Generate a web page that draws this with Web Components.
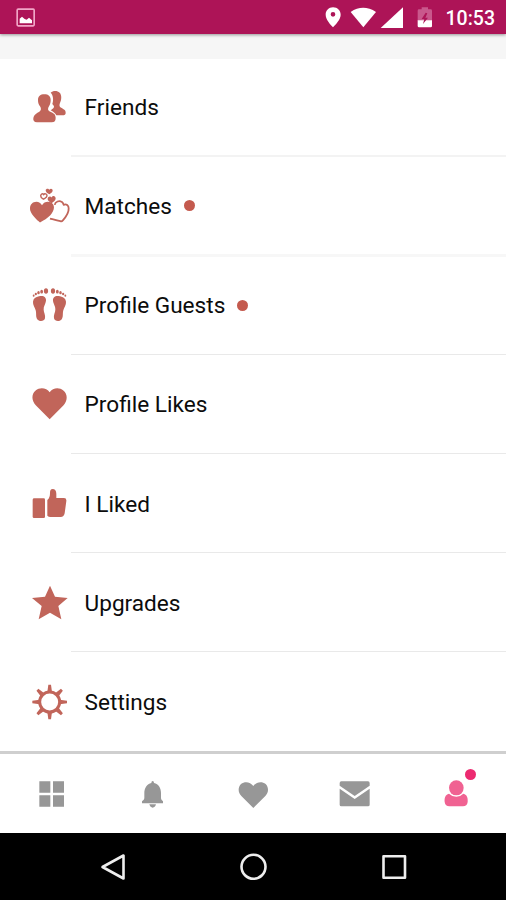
<!DOCTYPE html>
<html lang="en">
<head>
<meta charset="utf-8">
<meta name="viewport" content="width=device-width, initial-scale=1">
<title>Profile menu</title>
<style>
  html, body { margin: 0; height: 100%; }
  body { background: #fff; font-family: Roboto, sans-serif; overflow: hidden; }
</style>
</head>
<body>
<profile-screen></profile-screen>

<script>
const MENU_ICONS = {
  friends: `<svg viewBox="30 20 120 120">
    <path d="M92 37C98 31 112 30 119 37C125 43 125 56 121 65C118 72 117 77 121 81C128 86 138 88 137 98C137 103 134 105 127 105H109C106 99 99 94 92 90C95 87 99 85 101 82C104 78 100 75 97 71C101 59 100 45 92 37Z"/>
    <path d="M73 42C85 42 92 48 92 59C92 67 90 73 87 78C83 85 83 90 88 93C96 98 107 99 107 112C107 121 104 126 95 126H51C42 126 39 121 40 114C41 103 51 98 58 94C64 91 64 84 60 78C56 73 54 67 54 59C54 48 61 42 73 42Z"/>
  </svg>`,
  matches: `<svg viewBox="30 17.4 120 120">
    <path d="M66 75C73 62 91 62 99 72C106 83 99 96 91 105C82 114 72 120 60 127C50 119 36 106 31 92C27 77 36 65 49 65C57 65 62 69 66 75Z"/>
    <path d="M104 74C106 64 118 60 125 65C128 67 130 70 131 74C139 70 146 76 146 84C147 97 136 112 128 121C126 124 124 124 121 123C111 121 101 118 90 115" fill="none" stroke="currentColor" stroke-width="5.4" stroke-linejoin="round"/>
    <path d="M88 29C91 23 98 25 98 31C98 37 92 39 88 42C83 39 77 36 77 30C78 24 86 24 88 29Z"/>
    <path d="M95 52C98 45 107 47 107 55C107 62 99 65 95 69C88 65 82 61 83 55C84 48 92 47 95 52Z"/>
    <path d="M71 43C74 38 81 41 81 47C81 53 75 54 70 57C66 55 62 53 62 47C63 41 68 39 71 43Z" fill="none" stroke="currentColor" stroke-width="4.4"/>
  </svg>`,
  guests: `<svg viewBox="30 15 120 120">
    <g id="foot">
      <path d="M57 49C69 45 79 50 78 62C77 72 70 78 71 89C71 97 77 105 75 115C73 124 60 126 53 119C46 112 50 101 47 91C45 82 38 75 39 65C40 56 47 51 57 49Z"/>
      <ellipse cx="78" cy="33" rx="6.3" ry="8.2"/>
      <ellipse cx="65" cy="35" rx="4.2" ry="5.8"/>
      <ellipse cx="55.500" cy="38" rx="3.8" ry="4.8"/>
      <ellipse cx="47.500" cy="42" rx="3.3" ry="4"/>
      <ellipse cx="41" cy="47" rx="2.8" ry="3.4"/>
    </g>
    <use href="#foot" transform="translate(177 0) scale(-1 1)"/>
  </svg>`,
  likes: `<svg viewBox="30 12.6 120 120">
    <path d="M89 37C98 24 118 22 130 32C144 44 143 63 130 77L89 118L48 77C35 63 33 44 47 32C59 22 80 24 89 37Z"/>
  </svg>`,
  liked: `<svg viewBox="30 10 120 120">
    <path d="M43 53H71Q75 53 75 57V108Q75 112 71 112H42Q38 112 38 108V57Q38 53 43 53Z"/>
    <path d="M82 58C88 53 90 47 90 37C90 29 92 25 98 25C105 25 109 31 109 39V52H132Q140 52 139 61L134 98Q132 109 122 109H91Q86 109 82 105Z"/>
  </svg>`,
  upgrades: `<svg viewBox="30 23 120 120">
    <path d="M90 31L105 64L143 68L115 92L124 132L90 112L56 132L65 92L36 68L75 64Z"/>
  </svg>`,
  settings: `<svg viewBox="30 320 120 120">
    <circle cx="89" cy="380" r="30" fill="none" stroke="currentColor" stroke-width="9"/>
    <g id="teeth">
      <path d="M82 350L85 328H93L96 350ZM82 410L85 432H93L96 410ZM59 373L37 376V384L59 387ZM119 373L141 376V384L119 387Z"/>
    </g>
    <use href="#teeth" transform="rotate(45 89 380)"/>
  </svg>`
};

const TAB_ICONS = {
  grid: `<svg viewBox="98 107 108 108">
    <path d="M117 123H150V157H117ZM158 123H191V157H158ZM117 165H150V199H117ZM158 165H191V199H158Z"/>
  </svg>`,
  bell: `<svg viewBox="401 107 108 108">
    <path d="M457 122Q461 122 461 128C475 131 482 143 482 158V174Q482 179 488 183V189H425V183Q432 179 432 174V158C432 143 440 131 453 128Q453 122 457 122Z"/>
    <path d="M447 192H467Q464 202 457 202Q450 202 447 192Z"/>
  </svg>`,
  heart: `<svg viewBox="705 107 108 108">
    <path d="M760 137C769 124 786 122 797 131C807 142 806 157 796 167L760 203L724 167C714 157 713 142 723 131C734 122 751 124 760 137Z"/>
  </svg>`,
  mail: `<svg viewBox="250 107 108 108">
    <path d="M261 128Q261 123 266 123H346Q351 123 351 128V136L306 167L261 136Z"/>
    <path d="M261 145L306 176L351 145V193Q351 198 346 198H266Q261 198 261 193Z"/>
  </svg>`,
  person: `<svg viewBox="553 107 108 108">
    <path d="M589 160C577 163 575 174 576 185Q578 198 590 198H631Q643 198 645 185C646 174 644 163 632 160Q623 169 611 169Q598 169 589 160Z"/>
    <ellipse cx="611" cy="142.500" rx="22" ry="22.500"/>
  </svg>`
};

class StatusBar extends HTMLElement {
  connectedCallback() {
    const shadow = this.attachShadow({ mode: "open" });
    shadow.innerHTML = `
      <style>
        :host {
          display: flex;
          align-items: center;
          box-sizing: border-box;
          height: 34px;
          padding: 0 11px 0 16px;
          background: #ad1457;
          color: #fff;
          box-shadow: 0 1px 3px rgba(0, 0, 0, 0.4);
        }
        svg { display: block; fill: currentColor; }
        .system { margin-left: auto; }
        time {
          margin-left: 10px;
          padding-top: 3px;
          font-size: 19.5px;
          font-weight: 500;
          line-height: 31px;
        }
      </style>
      <svg width="20" height="34" viewBox="48 0 60 102">
        <rect x="51.500" y="27.500" width="51" height="50" rx="3" fill="none" stroke="#f1a6c7" stroke-width="5"/>
        <path d="M59 70V56L66 50L74 57L80 59L87 53L96 61V70Z"/>
      </svg>
      <svg class="system" width="112" height="34" viewBox="54 0 336 102">
        <path fill-rule="evenodd" d="M81 22C95 22 104 32 104 44C104 58 90 72 81 82C72 72 59 58 59 44C59 32 68 22 81 22ZM81 36A7 7 0 1 0 81 50A7 7 0 1 0 81 36Z"/>
        <path d="M134 36Q171 11 210 36L172 82Z"/>
        <path d="M291 22V84H224Z"/>
        <path d="M335 62V32Q335 28 339 28H347V22H366V28H374Q378 28 378 32V62Z" fill="#c9588c"/>
        <path d="M335 61H378V78Q378 82 374 82H339Q335 82 335 78Z"/>
        <path d="M359 38L347 57H355L351 72L366 53H358L364 40Z" fill="#ad1457"/>
      </svg>
      <time><slot></slot></time>
    `;
  }
}

class MenuItem extends HTMLElement {
  connectedCallback() {
    const shadow = this.attachShadow({ mode: "open" });
    shadow.innerHTML = `
      <style>
        :host {
          display: flex;
          align-items: center;
          position: relative;
          box-sizing: border-box;
          height: 99.2px;
          padding-left: 30px;
          color: #c1655a;
        }
        .icon svg { display: block; width: 40px; height: 40px; fill: currentColor; }
        .label {
          margin-left: 14.6px;
          padding-top: 2px;
          color: #0c0c0c;
          font-size: 22.6px;
          line-height: 30px;
          white-space: nowrap;
        }
        .dot {
          display: none;
          width: 11px;
          height: 11px;
          margin-left: 12px;
          border-radius: 50%;
          background: #c45a4e;
        }
        :host([unread]) .dot { display: block; }
        .rule {
          position: absolute;
          left: 71px;
          right: 0;
          bottom: var(--rule-bottom, 0);
          height: var(--rule-height, 1px);
          background: var(--rule-color, #e9e9e9);
        }
        :host(:last-of-type) .rule { display: none; }
      </style>
      <span class="icon">${MENU_ICONS[this.getAttribute("icon")]}</span>
      <span class="label"><slot></slot></span>
      <span class="dot"></span>
      <span class="rule"></span>
    `;
  }
}

class TabItem extends HTMLElement {
  connectedCallback() {
    const shadow = this.attachShadow({ mode: "open" });
    shadow.innerHTML = `
      <style>
        :host {
          display: flex;
          flex: 1;
          align-items: center;
          justify-content: center;
          color: #979797;
        }
        :host([active]) { color: #f06292; }
        .icon { position: relative; }
        svg { display: block; width: 36px; height: 36px; fill: currentColor; }
        .badge {
          display: none;
          position: absolute;
          top: -7px;
          right: -3px;
          width: 11px;
          height: 11px;
          border-radius: 50%;
          background: #ec2a70;
        }
        :host([active]) .badge { display: block; }
      </style>
      <span class="icon">${TAB_ICONS[this.getAttribute("icon")]}<span class="badge"></span></span>
    `;
  }
}

class TabBar extends HTMLElement {
  connectedCallback() {
    const shadow = this.attachShadow({ mode: "open" });
    shadow.innerHTML = `
      <style>
        :host {
          display: flex;
          box-sizing: border-box;
          height: 82px;
          border-top: 3px solid #cfcfcf;
          background: #fff;
        }
      </style>
      <slot></slot>
    `;
  }
}

class SystemNav extends HTMLElement {
  connectedCallback() {
    const shadow = this.attachShadow({ mode: "open" });
    shadow.innerHTML = `
      <style>
        :host {
          display: grid;
          grid-template-columns: repeat(3, 140.5px);
          justify-content: center;
          align-items: center;
          justify-items: center;
          height: 67px;
          background: #000;
        }
        svg {
          display: block;
          width: 30px;
          height: 30px;
          fill: none;
          stroke: #eee;
          stroke-width: 2.6;
          stroke-linejoin: round;
        }
      </style>
      <svg viewBox="0 0 30 30"><path d="M25.500 3.500V26.500L4.500 15Z"/></svg>
      <svg viewBox="0 0 30 30"><circle cx="15.500" cy="14.800" r="12"/></svg>
      <svg viewBox="0 0 30 30"><rect x="4.500" y="4.300" width="21.500" height="21.500"/></svg>
    `;
  }
}

class ProfileScreen extends HTMLElement {
  connectedCallback() {
    const shadow = this.attachShadow({ mode: "open" });
    shadow.innerHTML = `
      <style>
        :host {
          display: flex;
          flex-direction: column;
          height: 900px;
          background: #f6f6f6;
        }
        status-bar { flex: none; position: relative; }
        .menu {
          flex: 1;
          min-height: 0;
          margin-top: 25px;
          background: #fff;
        }
        menu-item:nth-child(1) {
          height: 97.4px;
          padding-bottom: 2.4px;
          --rule-bottom: -1px;
          --rule-height: 2px;
          --rule-color: #f3f3f3;
        }
        menu-item:nth-child(2) {
          --rule-bottom: -1px;
          --rule-height: 3px;
          --rule-color: #f7f7f7;
        }
      </style>
      <status-bar>10:53</status-bar>
      <div class="menu">
        <menu-item icon="friends">Friends</menu-item>
        <menu-item icon="matches" unread>Matches</menu-item>
        <menu-item icon="guests" unread>Profile Guests</menu-item>
        <menu-item icon="likes">Profile Likes</menu-item>
        <menu-item icon="liked">I Liked</menu-item>
        <menu-item icon="upgrades">Upgrades</menu-item>
        <menu-item icon="settings">Settings</menu-item>
      </div>
      <tab-bar>
        <tab-item icon="grid"></tab-item>
        <tab-item icon="bell"></tab-item>
        <tab-item icon="heart"></tab-item>
        <tab-item icon="mail"></tab-item>
        <tab-item icon="person" active></tab-item>
      </tab-bar>
      <system-nav></system-nav>
    `;
  }
}

customElements.define("status-bar", StatusBar);
customElements.define("menu-item", MenuItem);
customElements.define("tab-item", TabItem);
customElements.define("tab-bar", TabBar);
customElements.define("system-nav", SystemNav);
customElements.define("profile-screen", ProfileScreen);
</script>
</body>
</html>
